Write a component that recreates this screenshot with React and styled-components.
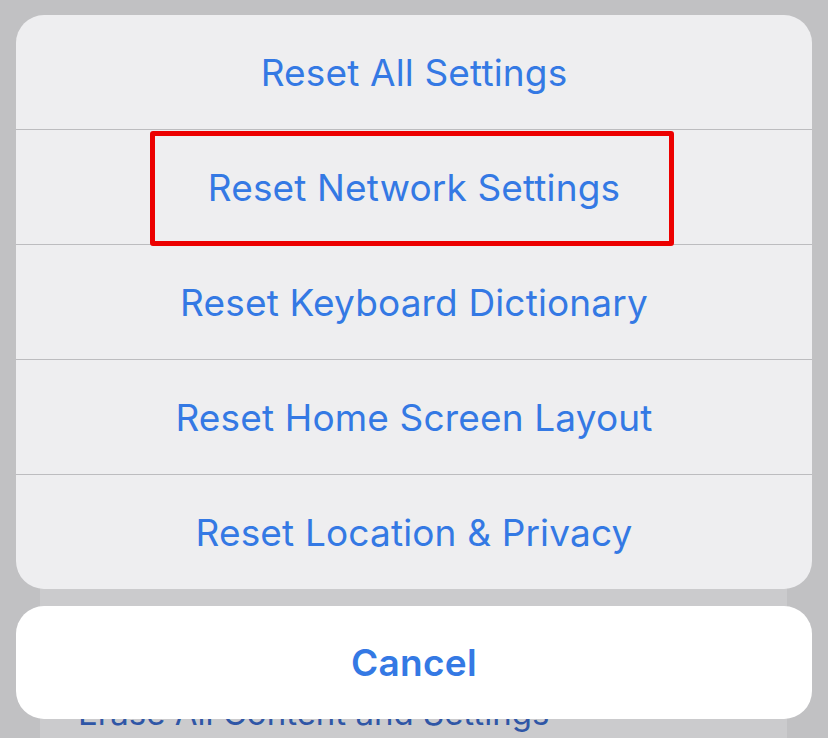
import React from "react";
import styled, { createGlobalStyle } from "styled-components";

const GlobalStyle = createGlobalStyle`
  html, body {
    margin: 0;
    padding: 0;
    background: #c1c1c3;
  }
  body {
    font-family: Inter, "Liberation Sans", sans-serif;
  }
`;

const Screen = styled.div`
  position: relative;
  width: 828px;
  height: 738px;
  overflow: hidden;
  background: #c1c1c3;
`;

/* dimmed settings page underneath the action sheet */
const BehindPage = styled.div`
  margin: 420px 41px 0 40px;
  height: 318px;
  background: #cbcbcd;
  display: flex;
  flex-direction: column;
  justify-content: flex-end;
`;

const BehindRow = styled.div`
  padding: 0 0 3px 38px;
  font-size: 33px;
  line-height: 44px;
  color: #2f56a6;
  white-space: nowrap;
`;

const Overlay = styled.div`
  position: absolute;
  inset: 0;
  padding: 15px 16px 0;
  display: flex;
  flex-direction: column;
  gap: 17px;
`;

const Sheet = styled.div`
  background: #eeeef0;
  border-radius: 28px;
  overflow: hidden;
  display: flex;
  flex-direction: column;
`;

const ActionRow = styled.div`
  position: relative;
  height: 114px;
  display: flex;
  align-items: center;
  justify-content: center;
  font-size: 37px;
  color: #3479e4;
  letter-spacing: 0.15px;
  border-top: ${(p) => (p.$first ? "none" : "1px solid #bcbcbf")};
`;

const Highlight = styled.div`
  position: absolute;
  top: 1px;
  left: 134px;
  width: 524px;
  height: 115px;
  box-sizing: border-box;
  border: 5px solid #ec0000;
  border-radius: 3px;
  z-index: 2;
`;

const CancelButton = styled.div`
  height: 113px;
  background: #ffffff;
  border-radius: 28px;
  display: flex;
  align-items: center;
  justify-content: center;
  font-size: 37px;
  font-weight: 600;
  color: #3479e4;
  letter-spacing: 0.3px;
`;

const actions = [
  "Reset All Settings",
  "Reset Network Settings",
  "Reset Keyboard Dictionary",
  "Reset Home Screen Layout",
  "Reset Location & Privacy",
];

export default function App() {
  return (
    <>
      <GlobalStyle />
      <Screen>
        <BehindPage>
          <BehindRow>Erase All Content and Settings</BehindRow>
        </BehindPage>
        <Overlay>
          <Sheet>
            {actions.map((label, i) => (
              <ActionRow key={label} $first={i === 0}>
                {label}
                {i === 1 && <Highlight />}
              </ActionRow>
            ))}
          </Sheet>
          <CancelButton>Cancel</CancelButton>
        </Overlay>
      </Screen>
    </>
  );
}
